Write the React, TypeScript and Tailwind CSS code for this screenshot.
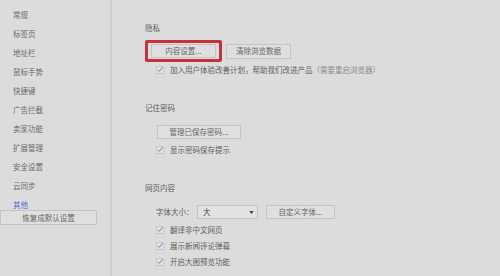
import React from 'react'

const font = { fontFamily: '"Noto Sans CJK SC", "Noto Sans", sans-serif' }

const navItems = ['常规', '标签页', '地址栏', '鼠标手势', '快捷键', '广告拦截', '卖家功能', '扩展管理', '安全设置', '云同步']

function Check({ label, note }: { label: string; note?: string }) {
  return (
    <div className="flex items-center h-[10px] pl-[11px] gap-[6px]">
      <span className="w-[8px] h-[8px] border border-[#c8c8c8] bg-[#e4e4e4] flex items-center justify-center">
        <svg viewBox="0 0 10 10" className="w-[9px] h-[9px] -mt-[1px]">
          <path d="M1.5 5.5 L4 8 L9 1.5" fill="none" stroke="#4a78c8" strokeWidth="1.4" />
        </svg>
      </span>
      <span className="text-[#606060]">
        {label}
        {note && <span className="text-[#8a8a8a]">{note}</span>}
      </span>
    </div>
  )
}

function Btn({ children, className = '' }: { children: React.ReactNode; className?: string }) {
  return (
    <div className={`h-[14px] border border-[#c4c4c4] bg-[#dfdfdf] flex items-center justify-center text-[#666] ${className}`}>
      {children}
    </div>
  )
}

export default function App() {
  return (
    <div className="w-[500px] h-[276px] bg-[#dcdcdc] flex text-[7.5px] leading-[10px] overflow-hidden" style={font}>
      {/* sidebar */}
      <div className="w-[112px] shrink-0 border-r-2 border-[#d0d0d0] pt-[5px]">
        {navItems.map((item) => (
          <div key={item} className="h-[19px] flex items-center pl-[13px] text-[#6a6a6a]">{item}</div>
        ))}
        <div className="h-[19px] flex items-center pl-[13px] text-[#4a72c0]">其他</div>
        <div className="w-[97px] h-[15px] -mt-[4px] border border-[#c4c4c4] bg-[#dfdfdf] flex items-center justify-center text-[#666]">
          恢复成默认设置
        </div>
      </div>

      {/* main */}
      <div className="flex-1 flex flex-col pl-[33px] pt-[23px]">
        <div className="text-[#606060]">隐私</div>
        <div className="flex items-center gap-[4px] mt-[7px]">
          <div className="border-[3px] border-[#c5323c] rounded-[2px] px-[3px] py-[1px]">
            <Btn className="w-[65px]">内容设置...</Btn>
          </div>
          <Btn className="w-[65px] h-[15px]">清除浏览数据</Btn>
        </div>
        <div className="mt-[3px]">
          <Check label="加入用户体验改善计划，帮助我们改进产品" note="（需要重启浏览器）" />
        </div>

        <div className="text-[#606060] mt-[28px]">记住密码</div>
        <Btn className="w-[84px] ml-[12px] mt-[12px]">管理已保存密码...</Btn>
        <div className="mt-[6px]">
          <Check label="显示密码保存提示" />
        </div>

        <div className="text-[#606060] mt-[28px]">网页内容</div>
        <div className="flex items-center h-[14px] mt-[12px] pl-[11px]">
          <span className="text-[#606060] w-[41px]">字体大小：</span>
          <div className="w-[61px] h-[14px] border border-[#c4c4c4] bg-[#e2e2e2] flex items-center justify-between pl-[5px] pr-[3px] text-[#444]">
            <span>大</span>
            <svg viewBox="0 0 6 4" className="w-[5px] h-[3px]">
              <path d="M0 0 H6 L3 4 Z" fill="#444" />
            </svg>
          </div>
          <Btn className="w-[69px] ml-[8px]">自定义字体...</Btn>
        </div>
        <div className="flex flex-col gap-[6px] mt-[6px]">
          <Check label="翻译非中文网页" />
          <Check label="展示新闻评论弹幕" />
          <Check label="开启大图预览功能" />
        </div>
      </div>
    </div>
  )
}
